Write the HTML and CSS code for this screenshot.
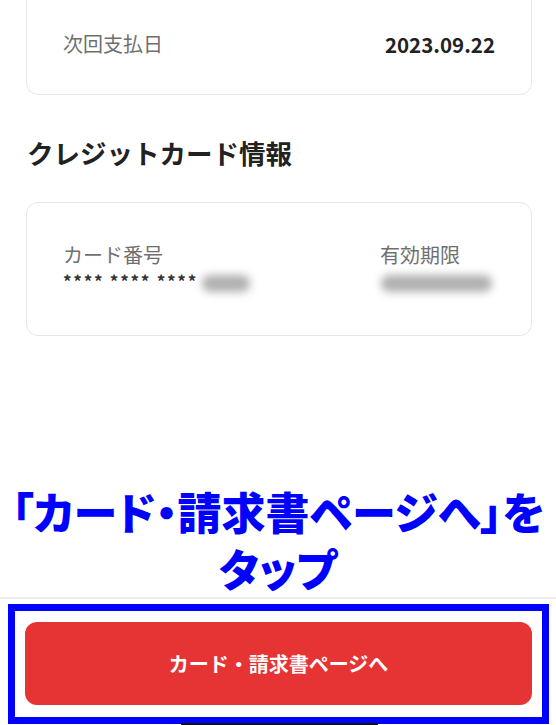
FILE: index.html
```html
<!DOCTYPE html>
<html lang="ja">
<head>
    <meta charset="UTF-8">
    <meta name="viewport" content="width=device-width, initial-scale=1.0">
    <title>お支払い情報</title>
    <link rel="stylesheet" href="styles.css">
</head>
<body>
    <div class="page">
        <main class="content">
            <section class="card card-top">
                <div class="row">
                    <span class="label">次回支払日</span>
                    <span class="value">2023.09.22</span>
                </div>
            </section>

            <h2 class="section-title">クレジットカード情報</h2>

            <section class="card card-info">
                <div class="info-col">
                    <span class="label">カード番号</span>
                    <span class="masked">**** **** ****<span class="blur blur-short"></span></span>
                </div>
                <div class="info-col">
                    <span class="label">有効期限</span>
                    <span class="masked"><span class="blur blur-long"></span></span>
                </div>
            </section>
        </main>

        <footer class="footer">
            <div class="highlight">
                <button class="primary-btn">カード・請求書ページへ</button>
            </div>
        </footer>

        <!-- annotation laid over the screenshot -->
        <div class="note">
            <span class="note-line">「カード・請求書ページへ」を</span>
            <span class="note-line">タップ</span>
        </div>
        <div class="home-bar"></div>
    </div>
</body>
</html>
```

FILE: styles.css
```css
* {
    margin: 0;
    padding: 0;
    box-sizing: border-box;
}

body {
    font-family: "Noto Sans CJK JP", "Noto Sans", sans-serif;
    background-color: #ffffff;
    color: #222222;
}

.page {
    position: relative;
    height: 725px;
    display: flex;
    flex-direction: column;
    overflow: hidden;
}

.content {
    flex: 1;
    padding: 0 24px 0 26px;
}

.card {
    border: 1px solid #e6e6e6;
    border-radius: 12px;
    background-color: #ffffff;
}

.card-top {
    margin-top: -40px;
    padding: 69px 36px 36px;
}

.row {
    display: flex;
    justify-content: space-between;
    align-items: center;
    line-height: 28px;
}

.label {
    font-size: 20px;
    color: #6f6f6f;
    line-height: 28px;
}

.value {
    font-size: 20.5px;
    font-weight: 700;
    color: #222222;
}

.section-title {
    margin: 40px 0 31px 1px;
    font-size: 26.5px;
    line-height: 36px;
    font-weight: 700;
    color: #222222;
}

.card-info {
    display: flex;
    justify-content: space-between;
    padding: 38px 36px 43px;
}

.info-col {
    display: flex;
    flex-direction: column;
}

.masked {
    margin-top: 2px;
    font-size: 17px;
    line-height: 20px;
    font-weight: 700;
    letter-spacing: 1.7px;
    color: #333333;
    white-space: nowrap;
}

.blur {
    display: inline-block;
    height: 17px;
    border-radius: 8px;
    background-color: #b0b0b0;
    filter: blur(4px);
    vertical-align: middle;
}

.blur-short {
    width: 48px;
    margin-left: 4px;
}

.blur-long {
    width: 111px;
    margin: 0 3px 0 1px;
}

.footer {
    border-top: 2px solid #ececec;
    padding: 5px 7px 1px 8px;
}

.highlight {
    border: 7px solid #0000ff;
    padding: 11px 10px 12px;
}

.primary-btn {
    display: block;
    width: 100%;
    height: 83px;
    border: none;
    border-radius: 12px;
    background-color: #e63434;
    color: #ffffff;
    font-family: inherit;
    font-size: 20px;
    font-weight: 700;
}

.note {
    position: absolute;
    top: 483px;
    left: 0;
    right: 0;
    text-align: center;
    color: #0000ff;
}

.note-line {
    display: block;
    font-size: 44px;
    line-height: 57px;
    font-weight: 900;
    letter-spacing: 0;
    font-feature-settings: "palt";
    white-space: nowrap;
}

.home-bar {
    position: absolute;
    left: 181px;
    bottom: 0;
    width: 197px;
    height: 2px;
    background-color: #111111;
}
```
